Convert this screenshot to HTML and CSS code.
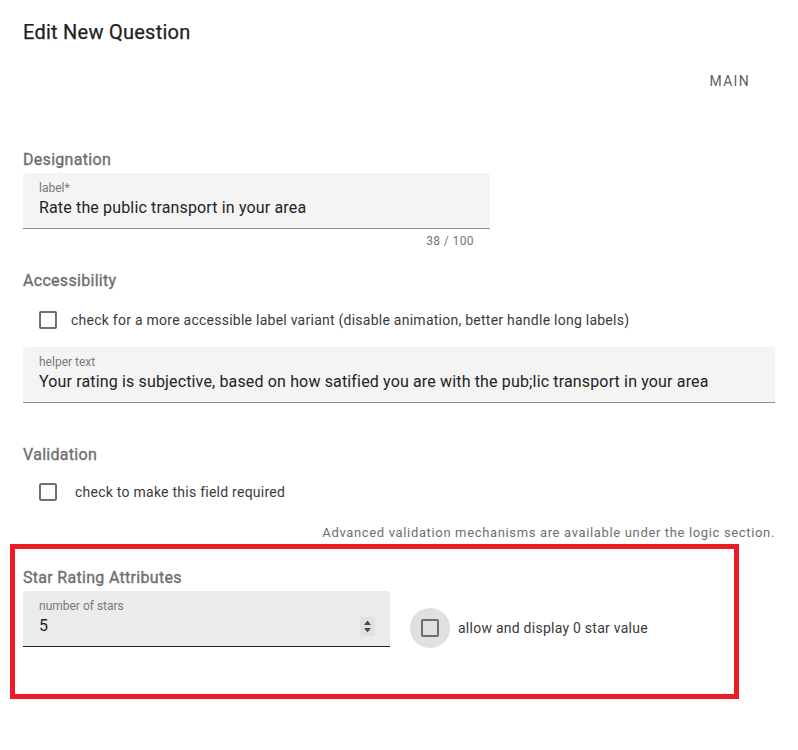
FILE: index.html
```html
<!DOCTYPE html>
<html>
<head>
<meta charset="utf-8">
<link rel="stylesheet" href="styles.css">
</head>
<body>
<div class="dialog">
  <h2 class="title">Edit New Question</h2>
  <div class="tabs"><span class="tab">Main</span></div>

  <section class="section s-designation">
    <h3 class="heading">Designation</h3>
    <div class="field field-label">
      <span class="f-label">label*</span>
      <span class="f-value">Rate the public transport in your area</span>
    </div>
    <div class="counter">38 / 100</div>
  </section>

  <section class="section s-access">
    <h3 class="heading">Accessibility</h3>
    <label class="check-row">
      <span class="box"></span>
      <span class="check-text">check for a more accessible label variant (disable animation, better handle long labels)</span>
    </label>
    <div class="field field-helper">
      <span class="f-label">helper text</span>
      <span class="f-value">Your rating is subjective, based on how satified you are with the pub;lic transport in your area</span>
    </div>
  </section>

  <section class="section s-valid">
    <h3 class="heading">Validation</h3>
    <label class="check-row check-row-wide">
      <span class="box"></span>
      <span class="check-text">check to make this field required</span>
    </label>
    <p class="note">Advanced validation mechanisms are available under the logic section.</p>
  </section>

  <section class="star-frame">
    <h3 class="heading">Star Rating Attributes</h3>
    <div class="star-row">
      <div class="field field-stars">
        <span class="f-label">number of stars</span>
        <div class="num-line">
          <span class="f-value">5</span>
          <span class="spinner">
            <svg width="9" height="15" viewBox="0 0 9 15"><path d="M4.5 1.5 L8 6 H1 Z M4.5 13.5 L8 9 H1 Z" fill="#4a4a4a"/></svg>
          </span>
        </div>
      </div>
      <label class="zero-check">
        <span class="halo"><span class="box"></span></span>
        <span class="check-text">allow and display 0 star value</span>
      </label>
    </div>
  </section>
</div>
</body>
</html>
```

FILE: styles.css
```css
* { box-sizing: border-box; }
html, body { margin: 0; padding: 0; background: #fff; }
body {
  font-family: Roboto, "Liberation Sans", sans-serif;
  color: rgba(0, 0, 0, 0.87);
  width: 798px;
  height: 750px;
  overflow: hidden;
}
.dialog { display: flex; flex-direction: column; }

.title {
  margin: 0;
  padding: 16px 23px 0;
  font-size: 20px;
  line-height: 32px;
  font-weight: 400;
  color: #212121;
  letter-spacing: 0.25px;
  -webkit-text-stroke: 0.25px #212121;
}
.tabs {
  display: flex;
  justify-content: flex-end;
  padding-right: 48px;
  margin-top: 23px;
}
.tab {
  font-size: 14px;
  line-height: 20px;
  font-weight: 400;
  text-transform: uppercase;
  letter-spacing: 1.3px;
  color: #5f5f5f;
}

.section { padding-left: 23px; }
.heading {
  margin: 0;
  font-size: 16px;
  line-height: 24px;
  font-weight: 400;
  color: #6e6e6e;
  letter-spacing: 0.3px;
  -webkit-text-stroke: 0.35px #6e6e6e;
}
.s-designation { margin-top: 57px; }
.s-access { margin-top: 20px; }
.s-valid { margin-top: 40px; }

.field {
  display: flex;
  flex-direction: column;
  margin-top: 2px;
  background: #f4f4f4;
  border-radius: 4px 4px 0 0;
  border-bottom: 1px solid #8c8c8c;
  padding: 7px 16px 8px;
  height: 56px;
}
.f-label {
  font-size: 12px;
  line-height: 16px;
  color: #7a7a7a;
}
.f-value {
  font-size: 16px;
  line-height: 24px;
  color: #232323;
  letter-spacing: 0.15px;
  white-space: nowrap;
  margin-top: 0;
}
.field-label { width: 467px; margin-top: 1px; }
.field-helper { width: 752px; margin-top: 6px; }

.counter {
  width: 467px;
  text-align: right;
  padding-right: 16px;
  margin-top: 4px;
  font-size: 12px;
  line-height: 16px;
  color: #757575;
  letter-spacing: 0.4px;
}

.check-row {
  display: flex;
  align-items: center;
  height: 42px;
  margin-top: 6px;
  padding-left: 16px;
  gap: 14px;
}
.check-row-wide { gap: 18px; margin-top: 4px; }
.box {
  display: block;
  width: 18px;
  height: 18px;
  border: 2px solid #6e6e6e;
  border-radius: 2px;
  flex: none;
}
.check-text {
  font-size: 14px;
  line-height: 20px;
  color: #3a3a3a;
  letter-spacing: 0.25px;
}

.note {
  margin: 12px 0 0;
  width: 752px;
  text-align: right;
  font-size: 13px;
  line-height: 16px;
  color: #6e6e6e;
  letter-spacing: 0.65px;
}

.star-frame {
  margin: 3px 0 0 10px;
  width: 729px;
  height: 155px;
  border: 5px solid #ed1c24;
  padding: 17px 0 0 8px;
}
.star-row {
  display: flex;
  align-items: flex-start;
  margin-top: 1px;
}
.field-stars {
  width: 367px;
  background: #ebebeb;
  border-bottom: 1px solid #222;
  margin-top: 0;
}
.num-line {
  display: flex;
  align-items: center;
  justify-content: space-between;
}
.spinner {
  display: flex;
  align-items: center;
  justify-content: center;
  width: 15px;
  height: 19px;
  background: #e2e2e2;
  margin-right: -1px;
  margin-top: 1px;
}
.zero-check {
  display: flex;
  align-items: center;
  margin-left: 20px;
  margin-top: 17px;
}
.halo {
  display: flex;
  align-items: center;
  justify-content: center;
  width: 40px;
  height: 40px;
  border-radius: 50%;
  background: #e0e0e0;
  margin-right: 8px;
}
```
